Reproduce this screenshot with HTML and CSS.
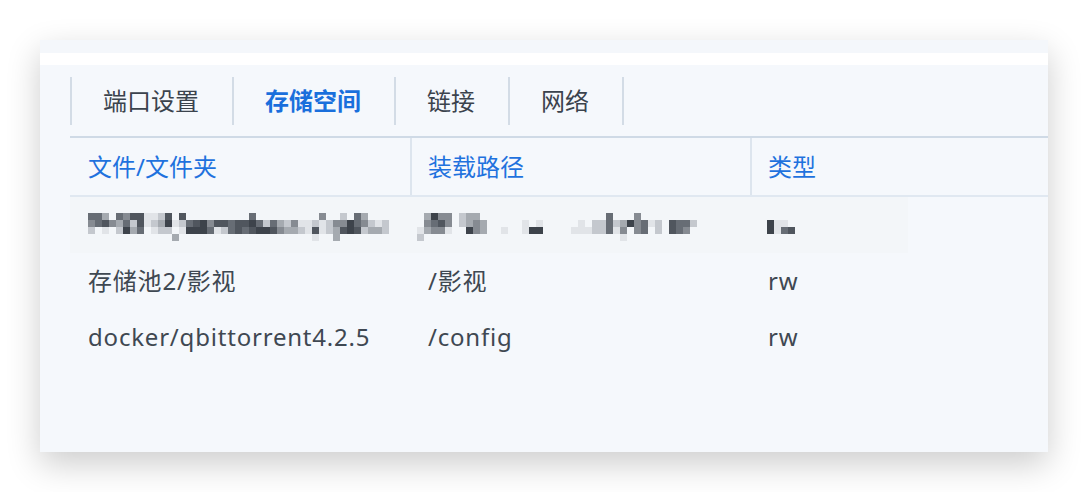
FILE: index.html
```html
<!DOCTYPE html>
<html lang="zh-CN">
<head>
<meta charset="utf-8">
<title>存储空间</title>
<link rel="stylesheet" href="styles.css">
</head>
<body>
<div class="card">
  <div class="strip-top"></div>
  <div class="strip-white"></div>
  <div class="panel">
    <nav class="tabs">
      <div class="tab">端口设置</div>
      <div class="tab active">存储空间</div>
      <div class="tab">链接</div>
      <div class="tab">网络</div>
    </nav>
    <div class="table">
      <div class="row head">
        <div class="cell">文件/文件夹</div>
        <div class="cell">装载路径</div>
        <div class="cell">类型</div>
      </div>
      <div class="row">
        <div class="cell span" aria-label="已打码">
          <svg class="mosaic" width="978" height="56" viewBox="0 0 978 56">
            <rect class="bgm" x="-5" y="0" width="843" height="56"/>
            <g transform="translate(0,16)">
              <rect class="c" x="18"/><rect class="c" x="25"/><rect class="e" x="32"/><rect class="c" x="46"/><rect class="d" x="53"/><rect class="b" x="60"/><rect class="b" x="67"/><rect class="g" x="74"/><rect class="g" x="81"/><rect class="f" x="88"/><rect class="b" x="95"/><rect class="b" x="109"/><rect class="c" x="179"/><rect class="d" x="249"/><rect class="f" x="270"/><rect class="c" x="284"/><rect class="e" x="291"/>
              <rect class="e" x="354"/><rect class="a" x="361"/><rect class="d" x="368"/><rect class="d" x="375"/><rect class="f" x="389"/><rect class="e" x="396"/><rect class="e" x="403"/>
              <rect class="c" x="536"/><rect class="d" x="564"/>
            </g>
            <g transform="translate(0,23)">
              <rect class="d" x="18"/><rect class="c" x="25"/><rect class="b" x="32"/><rect class="d" x="39"/><rect class="e" x="46"/><rect class="c" x="53"/><rect class="f" x="60"/><rect class="b" x="67"/><rect class="g" x="74"/><rect class="f" x="81"/><rect class="e" x="88"/><rect class="a" x="95"/><rect class="g" x="102"/><rect class="f" x="109"/><rect class="c" x="116"/><rect class="b" x="123"/><rect class="a" x="130"/><rect class="d" x="137"/><rect class="b" x="144"/><rect class="b" x="151"/><rect class="c" x="158"/><rect class="b" x="165"/><rect class="b" x="172"/><rect class="a" x="179"/><rect class="c" x="186"/><rect class="f" x="193"/><rect class="c" x="200"/><rect class="e" x="207"/><rect class="f" x="214"/><rect class="d" x="221"/><rect class="g" x="228"/><rect class="g" x="235"/><rect class="f" x="242"/><rect class="g" x="249"/><rect class="f" x="256"/><rect class="d" x="263"/><rect class="d" x="270"/><rect class="a" x="277"/><rect class="c" x="284"/><rect class="d" x="291"/><rect class="f" x="298"/><rect class="g" x="305"/><rect class="f" x="312"/>
              <rect class="d" x="354"/><rect class="c" x="361"/><rect class="b" x="368"/><rect class="d" x="375"/><rect class="f" x="389"/><rect class="e" x="396"/><rect class="d" x="403"/><rect class="e" x="410"/><rect class="g" x="452"/><rect class="g" x="466"/>
              <rect class="g" x="508"/><rect class="f" x="522"/><rect class="f" x="529"/><rect class="c" x="536"/><rect class="f" x="543"/><rect class="e" x="550"/><rect class="a" x="557"/><rect class="d" x="564"/><rect class="c" x="571"/><rect class="g" x="578"/><rect class="f" x="585"/><rect class="b" x="599"/><rect class="c" x="606"/><rect class="c" x="613"/><rect class="f" x="620"/>
              <rect class="a" x="697"/><rect class="g" x="704"/><rect class="g" x="711"/>
            </g>
            <g transform="translate(0,30)">
              <rect class="f" x="18"/><rect class="g" x="32"/><rect class="f" x="46"/><rect class="a" x="53"/><rect class="e" x="60"/><rect class="c" x="67"/><rect class="g" x="81"/><rect class="f" x="88"/><rect class="f" x="95"/><rect class="g" x="109"/><rect class="a" x="116"/><rect class="a" x="123"/><rect class="a" x="130"/><rect class="c" x="137"/><rect class="g" x="144"/><rect class="f" x="151"/><rect class="c" x="158"/><rect class="b" x="165"/><rect class="c" x="172"/><rect class="b" x="179"/><rect class="a" x="186"/><rect class="a" x="193"/><rect class="b" x="200"/><rect class="d" x="207"/><rect class="e" x="214"/><rect class="e" x="221"/><rect class="f" x="228"/><rect class="g" x="235"/><rect class="b" x="242"/><rect class="g" x="249"/><rect class="f" x="256"/><rect class="e" x="263"/><rect class="b" x="270"/><rect class="a" x="277"/><rect class="b" x="284"/><rect class="f" x="291"/><rect class="e" x="298"/><rect class="e" x="305"/><rect class="f" x="312"/>
              <rect class="g" x="347"/><rect class="e" x="354"/><rect class="d" x="361"/><rect class="d" x="368"/><rect class="g" x="375"/><rect class="a" x="396"/><rect class="d" x="403"/><rect class="e" x="410"/><rect class="g" x="431"/><rect class="g" x="452"/><rect class="a" x="459"/><rect class="a" x="466"/><rect class="g" x="501"/>
              <rect class="g" x="508"/><rect class="g" x="515"/><rect class="f" x="522"/><rect class="f" x="529"/><rect class="c" x="536"/><rect class="g" x="543"/><rect class="d" x="550"/><rect class="d" x="564"/><rect class="c" x="571"/><rect class="f" x="585"/><rect class="b" x="599"/><rect class="c" x="606"/><rect class="d" x="613"/>
              <rect class="a" x="697"/><rect class="g" x="704"/><rect class="c" x="711"/><rect class="b" x="718"/>
            </g>
            <g transform="translate(0,37)">
              <rect class="e" x="102"/><rect class="g" x="242"/><rect class="e" x="263"/><rect class="f" x="347"/><rect class="g" x="550"/>
            </g>
          </svg>
        </div>
      </div>
      <div class="row">
        <div class="cell">存储池2/影视</div>
        <div class="cell">/影视</div>
        <div class="cell">rw</div>
      </div>
      <div class="row">
        <div class="cell">docker/qbittorrent4.2.5</div>
        <div class="cell">/config</div>
        <div class="cell">rw</div>
      </div>
    </div>
  </div>
</div>
</body>
</html>
```

FILE: styles.css
```css
html, body {
  margin: 0;
  padding: 0;
  background: #ffffff;
}

body {
  width: 1088px;
  height: 492px;
  overflow: hidden;
  font-family: "Noto Sans", "Noto Sans CJK SC", sans-serif;
  font-size: 24px;
  color: #3f4852;
}

.card {
  margin: 40px 0 0 40px;
  width: 1008px;
  height: 412px;
  background: #f5f8fc;
  box-shadow: 0 12px 32px rgba(0, 0, 0, 0.2);
  overflow: hidden;
  display: flex;
  flex-direction: column;
}

.strip-top {
  height: 13px;
  background: #f4f7fb;
}

.strip-white {
  height: 12px;
  background: #ffffff;
}

.panel {
  flex: 1;
  padding-left: 30px;
  background: #f5f8fc;
}

.tabs {
  display: flex;
  padding: 12px 0 11px;
  border-bottom: 2px solid #cfdae6;
}

.tab {
  height: 48px;
  padding: 0 33px 0 31px;
  display: flex;
  align-items: center;
  border-right: 2px solid #d3dce6;
  color: #3b434d;
  line-height: 1;
}

.tab:first-child {
  border-left: 2px solid #d3dce6;
}

.tab.active {
  color: #1a6fdc;
  font-weight: 700;
}

.table {
  display: flex;
  flex-direction: column;
}

.row {
  display: grid;
  grid-template-columns: 340px 340px 1fr;
  height: 56px;
}

.row.head {
  height: 57px;
  border-bottom: 2px solid #e0e8f1;
}

.cell {
  display: flex;
  align-items: center;
  padding-left: 18px;
  line-height: 1;
  white-space: nowrap;
  letter-spacing: 0.8px;
}

.row.head .cell {
  color: #1f72de;
  letter-spacing: 0;
}

.row.head .cell + .cell {
  border-left: 2px solid #dde5ee;
  padding-left: 16px;
}

.cell.span {
  grid-column: 1 / -1;
  padding-left: 0;
  align-items: stretch;
}

.mosaic {
  display: block;
}

.mosaic rect {
  width: 7px;
  height: 7px;
}

.mosaic .bgm { fill: #f3f6f9; width: 843px; height: 56px; }
.mosaic .a { fill: #3d434b; }
.mosaic .b { fill: #50565e; }
.mosaic .c { fill: #676d75; }
.mosaic .d { fill: #868b92; }
.mosaic .e { fill: #a5aab0; }
.mosaic .f { fill: #c4c8ce; }
.mosaic .g { fill: #e1e4e8; }
```
